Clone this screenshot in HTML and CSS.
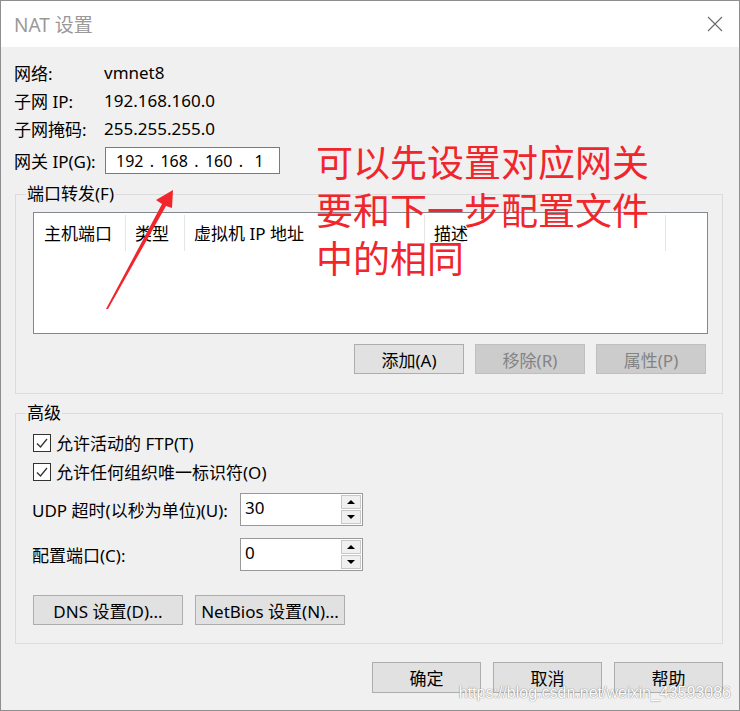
FILE: index.html
```html
<!DOCTYPE html>
<html lang="zh-CN">
<head>
  <meta charset="UTF-8">
  <title>NAT 设置</title>
  <link rel="stylesheet" href="styles.css">
</head>
<body>
  <div class="window">
    <div class="titlebar">
      <span class="title">NAT 设置</span>
      <svg class="close" width="16" height="16" viewBox="0 0 16 16">
        <path d="M1 1 L15 15 M15 1 L1 15" stroke="#6a6a6a" stroke-width="1.1" fill="none"/>
      </svg>
    </div>

    <div class="content">
      <div class="info">
        <span>网络:</span><span>vmnet8</span>
        <span>子网 IP:</span><span>192.168.160.0</span>
        <span>子网掩码:</span><span>255.255.255.0</span>
      </div>
      <div class="gateway">
        <span class="gw-label">网关 IP(G):</span>
        <div class="ipbox">
          <span>192</span><span class="dot">.</span>
          <span>168</span><span class="dot">.</span>
          <span>160</span><span class="dot">.</span>
          <span class="last">1</span>
        </div>
      </div>

      <fieldset class="group forward">
        <legend>端口转发(F)</legend>
        <div class="listbox">
          <div class="list-head">
            <div class="col c1">主机端口</div>
            <div class="col c2">类型</div>
            <div class="col c3">虚拟机 IP 地址</div>
            <div class="col c4">描述</div>
          </div>
        </div>
        <div class="btn-row">
          <button class="btn">添加(A)</button>
          <button class="btn" disabled>移除(R)</button>
          <button class="btn" disabled>属性(P)</button>
        </div>
      </fieldset>

      <fieldset class="group advanced">
        <legend>高级</legend>
        <label class="check"><span class="box"><svg width="14" height="14" viewBox="0 0 14 14"><path d="M2 7.5 L5.5 11 L12 3" stroke="#333" stroke-width="1.3" fill="none"/></svg></span>允许活动的 FTP(T)</label>
        <label class="check"><span class="box"><svg width="14" height="14" viewBox="0 0 14 14"><path d="M2 7.5 L5.5 11 L12 3" stroke="#333" stroke-width="1.3" fill="none"/></svg></span>允许任何组织唯一标识符(O)</label>

        <div class="spin-row first">
          <span class="spin-label">UDP 超时(以秒为单位)(U):</span>
          <div class="spin">
            <span class="spin-value">30</span>
            <div class="spin-btns">
              <span class="arrow up"></span>
              <span class="arrow down"></span>
            </div>
          </div>
        </div>
        <div class="spin-row">
          <span class="spin-label">配置端口(C):</span>
          <div class="spin">
            <span class="spin-value">0</span>
            <div class="spin-btns">
              <span class="arrow up"></span>
              <span class="arrow down"></span>
            </div>
          </div>
        </div>

        <div class="settings-row">
          <button class="btn wide">DNS 设置(D)...</button>
          <button class="btn wide">NetBios 设置(N)...</button>
        </div>
      </fieldset>

      <div class="footer">
        <button class="btn foot">确定</button>
        <button class="btn foot">取消</button>
        <button class="btn foot">帮助</button>
      </div>
    </div>

    <!-- hand-drawn annotation on top of the screenshot -->
    <div class="note">可以先设置对应网关<br>要和下一步配置文件<br>中的相同</div>
    <svg class="arrow-mark" width="740" height="711" viewBox="0 0 740 711">
      <polygon points="106,309 108,309 166,206 172,208 173,190 156,200 162,204" fill="#f0262c"/>
    </svg>
    <div class="watermark">https://blog.csdn.net/weixin_43593086</div>
  </div>
</body>
</html>
```

FILE: styles.css
```css
body {
  margin: 0;
  background: #f0f0f0;
  font-family: "Noto Sans", "Noto Sans CJK SC", sans-serif;
  font-size: 17px;
  color: #000;
}

.window {
  position: relative;
  width: 740px;
  height: 711px;
  box-sizing: border-box;
  border: 1px solid #8e8e8e;
  background: #f0f0f0;
  overflow: hidden;
}

.titlebar {
  height: 46px;
  background: #fff;
  display: flex;
  align-items: center;
  justify-content: space-between;
  padding: 0 16px 0 13px;
}

.title {
  font-size: 19px;
  color: #999;
}

.close {
  margin-top: -1px;
}

.content {
  padding: 11px 16px 0 13px;
}

.info {
  display: grid;
  grid-template-columns: 90px auto;
  grid-auto-rows: 28px;
  align-items: center;
}

.gateway {
  display: flex;
  align-items: center;
  margin-top: 5px;
  height: 27px;
}

.gw-label {
  width: 91px;
}

.ipbox {
  width: 175px;
  height: 27px;
  box-sizing: border-box;
  border: 1px solid #7a7a7a;
  background: #fff;
  display: flex;
  align-items: center;
  padding-left: 10px;
  font-size: 16px;
}

.ipbox .dot {
  width: 17px;
  text-align: center;
}

.ipbox .last {
  margin-left: 5px;
}

.group {
  margin: 10px 0 0 1px;
  border: 1px solid #dcdcdc;
  padding: 8px 14px 19px 17px;
}

.group legend {
  margin-left: -7px;
  padding: 0 1px;
  line-height: 20px;
}

.listbox {
  height: 122px;
  box-sizing: border-box;
  border: 1px solid #828790;
  background: #fff;
}

.list-head {
  display: flex;
  height: 38px;
}

.col {
  box-sizing: border-box;
  padding: 0 0 0 9px;
  line-height: 38px;
  border-right: 1px solid #e5e5e5;
  margin-top: 2px;
  height: 36px;
  white-space: nowrap;
}

.c1 { width: 92px; padding-left: 10px; }
.c2 { width: 59px; }
.c3 { width: 240px; }
.c4 { width: 241px; }

.btn-row {
  display: flex;
  justify-content: flex-end;
  gap: 11px;
  margin-top: 10px;
  padding-right: 2px;
}

.btn {
  font-family: inherit;
  font-size: 17px;
  color: #000;
  background: #e1e1e1;
  border: 1px solid #adadad;
  height: 30px;
  width: 110px;
  padding: 0;
}

.btn:disabled {
  background: #cccccc;
  border-color: #bfbfbf;
  color: #838383;
}

.advanced {
  margin-top: 9px;
  padding: 5px 14px 18px 17px;
}

.check {
  display: flex;
  align-items: center;
  height: 29px;
}

.box {
  width: 18px;
  height: 18px;
  box-sizing: border-box;
  border: 1px solid #333;
  background: #fff;
  display: flex;
  align-items: center;
  justify-content: center;
  margin-right: 5px;
}

.spin-row {
  display: flex;
  align-items: center;
  margin-top: 12px;
}

.spin-row.first {
  margin-top: 7px;
}

.spin-label {
  width: 208px;
  margin-left: -1px;
}

.spin {
  width: 123px;
  height: 33px;
  box-sizing: border-box;
  border: 1px solid #999;
  background: #fff;
  display: flex;
  justify-content: space-between;
}

.spin-value {
  padding: 2px 0 0 4px;
  font-size: 17px;
}

.spin-btns {
  display: flex;
  flex-direction: column;
  gap: 1px;
  padding: 1px 1px 1px 0;
}

.arrow {
  width: 20px;
  height: 14px;
  box-sizing: border-box;
  border: 1px solid #c8c8c8;
  background: #f0f0f0;
  display: flex;
  align-items: center;
  justify-content: center;
}

.arrow::after {
  content: "";
  border-left: 4px solid transparent;
  border-right: 4px solid transparent;
}

.arrow.up::after {
  border-bottom: 4px solid #000;
}

.arrow.down::after {
  border-top: 4px solid #000;
}

.settings-row {
  display: flex;
  gap: 12px;
  margin-top: 24px;
}

.btn.wide {
  width: 150px;
}

.footer {
  display: flex;
  justify-content: flex-end;
  gap: 12px;
  margin-top: 18px;
}

.btn.foot {
  width: 109px;
  height: 31px;
}

.note {
  position: absolute;
  left: 315px;
  top: 136px;
  font-family: "Noto Sans CJK SC", sans-serif;
  font-size: 37px;
  line-height: 48px;
  color: #f0262c;
  white-space: nowrap;
}

.arrow-mark {
  position: absolute;
  left: -1px;
  top: -1px;
  pointer-events: none;
}

.watermark {
  position: absolute;
  right: 8px;
  bottom: 8px;
  font-family: "Liberation Sans", Arial, sans-serif;
  font-size: 16px;
  color: #fff;
  text-shadow: 0 0 1px #8a8a8a, 0 0 1px #8a8a8a;
}
```
